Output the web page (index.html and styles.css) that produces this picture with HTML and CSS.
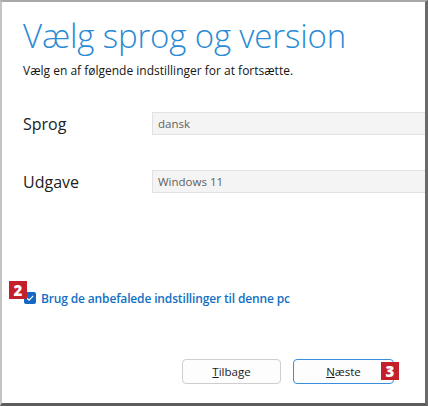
FILE: index.html
```html
<!DOCTYPE html>
<html lang="da">
<head>
<meta charset="utf-8">
<link rel="stylesheet" href="styles.css">
</head>
<body>
<div class="window">
  <h1 class="title">Vælg sprog og version</h1>
  <p class="subtitle">Vælg en af følgende indstillinger for at fortsætte.</p>
  <div class="row row-first">
    <span class="label">Sprog</span>
    <div class="field">dansk</div>
  </div>
  <div class="row">
    <span class="label">Udgave</span>
    <div class="field">Windows 11</div>
  </div>
  <div class="check-row">
    <span class="badge badge-2">2</span>
    <span class="checkbox">
      <svg viewBox="0 0 12 12" width="12" height="12"><path d="M3 6.2 L5.1 8.2 L9.2 3.8" fill="none" stroke="#fff" stroke-width="1.2"/></svg>
    </span>
    <span class="check-label">Brug de anbefalede indstillinger til denne pc</span>
  </div>
  <div class="buttons">
    <button class="btn"><u>T</u>ilbage</button>
    <button class="btn btn-primary"><u>N</u>æste</button>
    <span class="badge badge-3">3</span>
  </div>
</div>
</body>
</html>
```
FILE: styles.css
```css
* { box-sizing: border-box; }
html, body { margin: 0; padding: 0; background: #fff; }
.window {
  width: 428px;
  height: 406px;
  border-top: 2px solid #a8a8a8;
  border-left: 2px solid #c4c4c4;
  border-right: 3px solid #6a6a6a;
  border-bottom: 3px solid #5c5c5c;
  background: #fff;
  overflow: hidden;
  padding-left: 21px;
  font-family: "Open Sans", "Noto Sans", sans-serif;
  color: #1a1a1a;
  position: relative;
}
.title {
  margin: 14px 0 0 0;
  font-family: "Open Sans", sans-serif;
  font-weight: 300;
  font-size: 33px;
  line-height: 40px;
  color: #2a8ad4;
  letter-spacing: -0.15px;
}
.subtitle {
  margin: 7px 0 0 0;
  font-size: 12px;
  line-height: 16px;
  color: #151515;
}
.row {
  display: flex;
  align-items: center;
  margin-top: 35px;
  height: 23px;
}
.row-first { margin-top: 33px; }
.label {
  width: 129px;
  font-size: 16px;
  color: #222;
}
.field {
  flex: 1;
  height: 23px;
  background: #f4f4f4;
  border: 1px solid #e2e2e2;
  border-right: none;
  padding-left: 5px;
  font-size: 11.5px;
  line-height: 21px;
  color: #606060;
}
.check-row {
  display: flex;
  align-items: center;
  margin-top: 98px;
  margin-left: 1px;
  height: 14px;
}
.checkbox {
  width: 12px;
  height: 12px;
  border-radius: 2px;
  background: #1468c4;
  display: flex;
  align-items: center;
  justify-content: center;
}
.check-label {
  margin-left: 5px;
  font-size: 12px;
  font-weight: 600;
  color: #1270c4;
  letter-spacing: -0.15px;
}
.badge {
  position: absolute;
  background: #c4202c;
  color: #fff;
  font-family: "Open Sans", sans-serif;
  font-weight: 800;
  font-size: 15px;
  line-height: 18px;
  text-align: center;
  width: 18px;
  height: 18px;
}
.badge-2 { left: 7px; top: 279px; }
.badge-3 { left: 379px; top: 360px; }
.buttons {
  display: flex;
  gap: 12px;
  margin-top: 54px;
  margin-left: 159px;
}
.btn {
  width: 99px;
  height: 25px;
  border: 1px solid #cfcfcf;
  border-radius: 4px;
  background: #fdfdfd;
  font-family: "Open Sans", sans-serif;
  font-size: 11.5px;
  color: #1a1a1a;
  padding: 0;
}
.btn-primary {
  width: 101px;
  border-color: #3a90d8;
}
```
